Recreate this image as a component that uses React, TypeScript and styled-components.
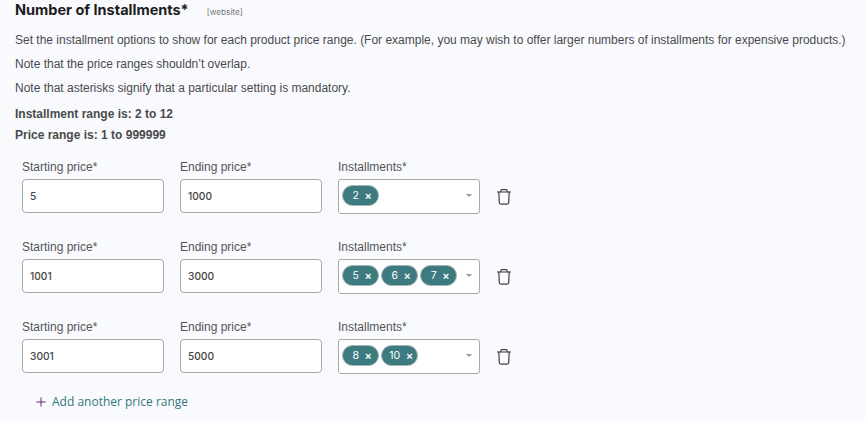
import React from "react";
import styled, { createGlobalStyle } from "styled-components";

const Global = createGlobalStyle`
  html, body { margin: 0; padding: 0; background: #f9fafe; }
  body { font-family: "Liberation Sans", Arial, sans-serif; }
`;

const Page = styled.div`
  width: 865px;
  height: 421px;
  overflow: hidden;
  box-sizing: border-box;
  padding: 0 0 0 15px;
  color: #4a4a4a;
`;

const TitleRow = styled.div`
  display: flex;
  align-items: center;
  height: 20px;
`;

const Title = styled.h2`
  margin: 0;
  font: 700 14.5px/20px Inter, sans-serif;
  color: #1c1c1c;
`;

const Scope = styled.span`
  margin-left: 18px;
  margin-top: 4px;
  font: 400 8.2px/10px Inter, sans-serif;
  color: #777;
`;

const Note = styled.p`
  margin: 0;
  height: 24px;
  font: 400 12px/24px "Liberation Sans", Arial, sans-serif;
  letter-spacing: -0.006px;
  white-space: nowrap;
`;

const Notes = styled.div`
  margin-top: 8px;
`;

const Limits = styled.div`
  margin-top: 4px;
`;

const Limit = styled.p`
  margin: 0;
  height: 21px;
  font: 700 12px/21px "Liberation Sans", Arial, sans-serif;
`;

const Ranges = styled.div`
  margin-top: 13px;
  padding-left: 7px;
  display: flex;
  flex-direction: column;
  gap: 25px;
`;

const Row = styled.div`
  display: grid;
  grid-template-columns: 142px 142px 142px 24px;
  column-gap: 16px;
`;

const Field = styled.div`
  display: flex;
  flex-direction: column;
`;

const Label = styled.label`
  height: 20px;
  font: 400 12px/16px "Liberation Sans", Arial, sans-serif;
  color: #555;
`;

const TextInput = styled.input`
  box-sizing: border-box;
  width: 142px;
  height: 34px;
  padding: 0 7px;
  border: 1px solid #a9a9a9;
  border-radius: 4px;
  background: #fff;
  font: 500 10.2px Inter, sans-serif;
  color: #444;
  outline: none;
`;

const Select = styled.div`
  box-sizing: border-box;
  position: relative;
  width: 142px;
  height: 35px;
  padding: 5px 3px 0 3px;
  display: flex;
  align-items: flex-start;
  gap: 2px;
  border: 1px solid #a9a9a9;
  border-radius: 3px;
  background: #fff;
`;

const Chip = styled.span`
  box-sizing: border-box;
  display: inline-flex;
  align-items: center;
  justify-content: center;
  gap: 6px;
  width: 37px;
  height: 21px;
  padding: 1px 0 0 3px;
  border-radius: 10.5px;
  border: 1px solid #9fb5b6;
  background: #3d7b80;
  color: #fff;
  font: 400 10.5px/1 Inter, sans-serif;
`;

const ChipClose = styled.span`
  font: 700 11px/1 "Liberation Sans", Arial, sans-serif;
`;

const Caret = styled.span`
  position: absolute;
  right: 7px;
  top: 14px;
  width: 0;
  height: 0;
  border-left: 3px solid transparent;
  border-right: 3px solid transparent;
  border-top: 3px solid #999;
`;

const TrashCell = styled.div`
  display: flex;
  align-items: flex-start;
  padding-top: 30px;
  margin-left: 1px;
`;

const AddRow = styled.div`
  margin-top: 18px;
  margin-left: 21px;
  display: flex;
  align-items: center;
  gap: 7px;
  height: 20px;
`;

const AddText = styled.span`
  margin-left: -1px;
  font: 400 12px/20px "Open Sans", sans-serif;
  color: #33777c;
`;

const Trash = () => (
  <svg width="14" height="16" viewBox="0 0 14 16" fill="none" stroke="#3f3f3f" strokeWidth="1.2" strokeLinecap="round" strokeLinejoin="round">
    <path d="M0.6 3h12.8" />
    <path d="M3.6 3l.5-1.6c.1-.4.4-.7.9-.7h4c.5 0 .8.3.9.7l.5 1.6" />
    <path d="M1.8 3l.5 10.6c0 .9.6 1.5 1.4 1.5h6.6c.8 0 1.4-.6 1.4-1.5L12.2 3" />
  </svg>
);

const Plus = () => (
  <svg width="10" height="10" viewBox="0 0 10 10" stroke="#5f2a76" strokeWidth="1" fill="none">
    <path d="M5 .5v9M.5 5h9" />
  </svg>
);

const rows = [
  { start: "5", end: "1000", chips: ["2"] },
  { start: "1001", end: "3000", chips: ["5", "6", "7"] },
  { start: "3001", end: "5000", chips: ["8", "10"] },
];

export default function App() {
  return (
    <Page>
      <Global />
      <TitleRow>
        <Title>Number of Installments*</Title>
        <Scope>[website]</Scope>
      </TitleRow>
      <Notes>
        <Note>Set the installment options to show for each product price range. (For example, you may wish to offer larger numbers of installments for expensive products.)</Note>
        <Note>Note that the price ranges shouldn’t overlap.</Note>
        <Note>Note that asterisks signify that a particular setting is mandatory.</Note>
      </Notes>
      <Limits>
        <Limit>Installment range is: 2 to 12</Limit>
        <Limit>Price range is: 1 to 999999</Limit>
      </Limits>
      <Ranges>
        {rows.map((r) => (
          <Row key={r.start}>
            <Field>
              <Label>Starting price*</Label>
              <TextInput readOnly value={r.start} />
            </Field>
            <Field>
              <Label>Ending price*</Label>
              <TextInput readOnly value={r.end} />
            </Field>
            <Field>
              <Label>Installments*</Label>
              <Select>
                {r.chips.map((c) => (
                  <Chip key={c}>
                    {c}
                    <ChipClose>×</ChipClose>
                  </Chip>
                ))}
                <Caret />
              </Select>
            </Field>
            <TrashCell>
              <Trash />
            </TrashCell>
          </Row>
        ))}
      </Ranges>
      <AddRow>
        <Plus />
        <AddText>Add another price range</AddText>
      </AddRow>
    </Page>
  );
}
